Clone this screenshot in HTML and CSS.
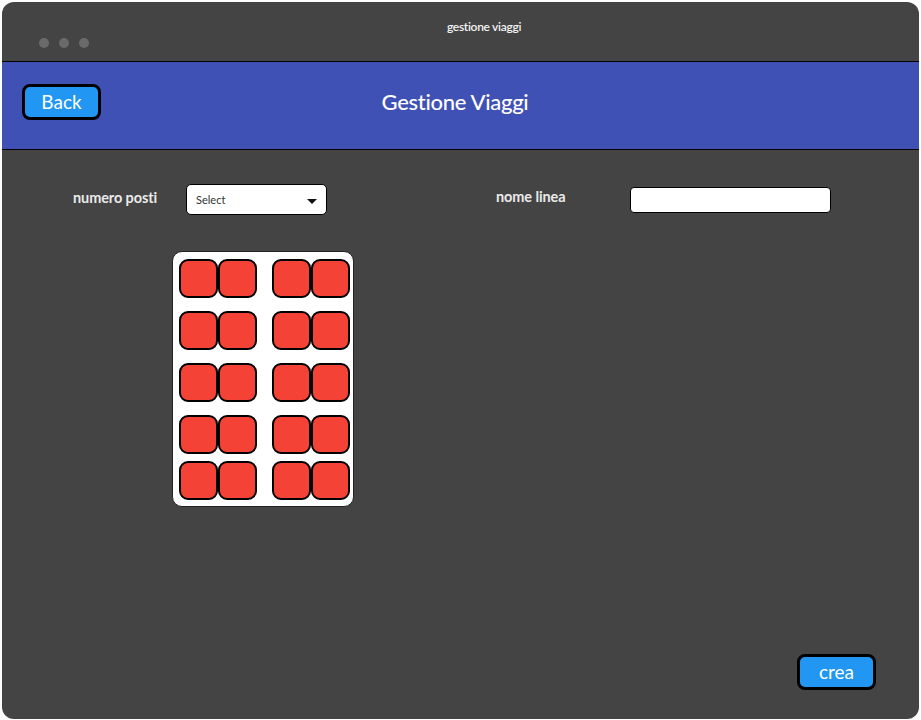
FILE: index.html
```html
<!DOCTYPE html>
<html>
<head>
<meta charset="utf-8">
<link rel="stylesheet" href="styles.css">
</head>
<body>
<div class="window">
  <div class="titlebar">
    <div class="dots"><span></span><span></span><span></span></div>
    <div class="wintitle">gestione viaggi</div>
  </div>
  <div class="header">
    <button class="btn back">Back</button>
    <h1 class="title">Gestione Viaggi</h1>
  </div>
  <div class="content">
    <div class="form-row">
      <label class="lbl lbl-posti">numero posti</label>
      <div class="select">Select<span class="caret"></span></div>
      <label class="lbl lbl-linea">nome linea</label>
      <div class="input"></div>
    </div>
    <div class="bus">
      <div class="seat-row"><div class="seat"></div><div class="seat"></div><div class="aisle"></div><div class="seat"></div><div class="seat"></div></div>
      <div class="seat-row"><div class="seat"></div><div class="seat"></div><div class="aisle"></div><div class="seat"></div><div class="seat"></div></div>
      <div class="seat-row"><div class="seat"></div><div class="seat"></div><div class="aisle"></div><div class="seat"></div><div class="seat"></div></div>
      <div class="seat-row"><div class="seat"></div><div class="seat"></div><div class="aisle"></div><div class="seat"></div><div class="seat"></div></div>
      <div class="seat-row last"><div class="seat"></div><div class="seat"></div><div class="aisle"></div><div class="seat"></div><div class="seat"></div></div>
    </div>
    <div class="footer">
      <button class="btn crea">crea</button>
    </div>
  </div>
</div>
</body>
</html>
```
FILE: styles.css
```css
* { box-sizing: border-box; }
html, body { margin: 0; padding: 0; background: #ffffff; }
body { font-family: "Lato", "Open Sans", sans-serif; }
.window {
  margin: 2px 0 0 2px;
  width: 917px;
  height: 717px;
  background: #444444;
  border-radius: 12px;
  overflow: hidden;
  display: flex;
  flex-direction: column;
}
.titlebar {
  height: 59px;
  position: relative;
  flex: none;
}
.dots {
  display: flex;
  gap: 10px;
  padding: 36px 0 0 37px;
}
.dots span {
  width: 10px; height: 10px; border-radius: 50%;
  background: #6a6a6a;
}
.wintitle {
  position: absolute;
  top: 17px; left: 0; right: 0;
  text-align: center;
  color: #f2f2f2;
  font-size: 12px;
  font-weight: 600;
  padding-left: 47px;
  letter-spacing: -0.3px;
}
.header {
  flex: none;
  height: 89px;
  background: #3F51B5;
  border-top: 1px solid #000;
  border-bottom: 1px solid #000;
  position: relative;
  display: flex;
  align-items: center;
  padding-left: 20px;
  padding-bottom: 8px;
}
.btn {
  width: 79px;
  height: 36px;
  background: #2196F3;
  border: 3px solid #000;
  border-radius: 8px;
  color: #fff;
  font-family: "Lato", "Open Sans", sans-serif;
  font-size: 19px;
  padding: 0;
  line-height: 28px;
}
.title {
  position: absolute;
  left: 0; right: 0; top: 26px;
  margin: 0;
  text-align: center;
  color: #fff;
  font-size: 22px;
  font-weight: 500;
  padding-right: 11px;
  letter-spacing: -0.3px;
}
.content {
  flex: 1;
  display: flex;
  flex-direction: column;
  position: relative;
}
.form-row {
  display: flex;
  align-items: center;
  padding: 34px 0 0 71px;
  height: 65px;
}
.lbl {
  color: #eaeaea;
  font-size: 14.5px;
  font-weight: 700;
  letter-spacing: -0.1px;
}
.lbl-posti { width: 113px; margin-bottom: 4px; }
.lbl-linea { width: 134px; margin-bottom: 6px; }
.select {
  width: 141px;
  height: 31px;
  background: #fff;
  border: 1px solid #000;
  border-radius: 5px;
  font-size: 11px;
  color: #333;
  padding-left: 9px;
  display: flex;
  align-items: center;
  justify-content: space-between;
  padding-right: 9px;
  margin-right: 169px;
}
.caret {
  width: 0; height: 0;
  border-left: 5px solid transparent;
  border-right: 5px solid transparent;
  border-top: 5px solid #111;
  margin-top: 3px;
}
.input {
  width: 201px;
  height: 26px;
  background: #fff;
  border: 1px solid #000;
  border-radius: 4px;
  margin-top: 1px;
}
.bus {
  margin: 36px 0 0 170px;
  width: 182px;
  height: 256px;
  background: #fff;
  border: 1px solid #222;
  border-radius: 10px;
  padding: 7px 0 0 6px;
  display: flex;
  flex-direction: column;
  gap: 13px;
}
.seat-row { display: flex; }
.seat-row.last { margin-top: -6px; }
.seat {
  width: 39px;
  height: 39px;
  background: #F44336;
  border: 2px solid #000;
  border-radius: 9px;
}
.aisle { width: 15px; }
.footer {
  position: absolute;
  right: 43px;
  bottom: 29px;
}
```
